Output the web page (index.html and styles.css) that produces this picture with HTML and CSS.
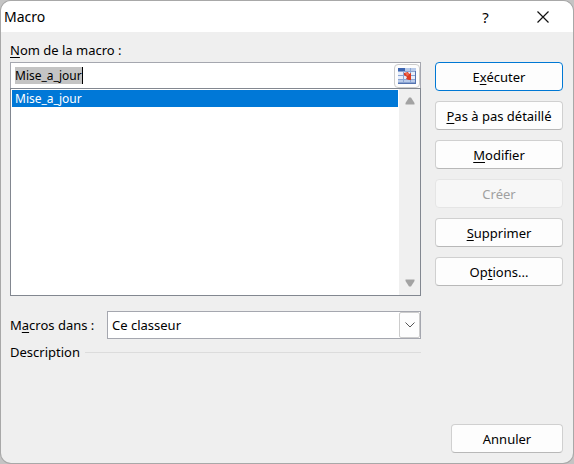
FILE: index.html
```html
<!DOCTYPE html>
<html lang="fr">
<head>
<meta charset="utf-8">
<title>Macro</title>
<link rel="stylesheet" href="styles.css">
</head>
<body>
<form class="dialog" role="dialog" aria-labelledby="title">
  <header class="titlebar">
    <h1 class="title" id="title">Macro</h1>
    <button class="caption help" type="button" aria-label="Aide">?</button>
    <button class="caption" type="button" aria-label="Fermer">
      <svg width="12" height="12" viewBox="0 0 12 12"><path d="M0.5 0.5 11.5 11.5M11.5 0.5 0.5 11.5" fill="none" stroke="#111" stroke-width="1.2"/></svg>
    </button>
  </header>
  <div class="content">
    <main class="main">
      <label class="label" for="name"><u>N</u>om de la macro :</label>
      <div class="field">
        <input class="name" id="name" type="text" value="Mise_a_jour">
        <button class="picker" type="button" aria-label="Choisir une cellule">
          <svg width="18" height="16" viewBox="0 0 18 16">
            <rect width="18" height="16" fill="#8ba5d3"/>
            <path d="M0 0h7v3H0z" fill="#3c64b0"/>
            <path d="M7 0h5v3H7zM13 0h5v3h-5z" fill="#b9cbea"/>
            <path d="M0 4h5v3H0zM6 4h6v3H6zM13 4h4v3h-4zM0 8h5v3H0zM6 8h6v3H6zM13 8h4v3h-4z" fill="#e8eefa"/>
            <path d="M0 12h5v2H0zM6 12h6v2H6zM13 12h4v2h-4z" fill="#b9cbea"/>
            <path d="M0 15h18v1H0zM17 3h1v13h-1z" fill="#5473b0"/>
            <path d="M6 5l4-1 1 2 2-1v7l-2 0-3-1 1-2-3-2z" fill="#dc3b22"/>
            <path d="M7 5h3l1 2-2 1z" fill="#ef6a4d"/>
          </svg>
        </button>
      </div>
      <div class="list">
        <ul class="options" role="listbox" aria-label="Macros">
          <li class="option" role="option" aria-selected="true">Mise_a_jour</li>
        </ul>
        <div class="scrollbar">
          <svg width="10" height="8" viewBox="0 0 10 8"><path d="M4 .5h2L9.500 6v1.500h-9V6z" fill="#a3a3a3"/></svg>
          <svg width="10" height="8" viewBox="0 0 10 8"><path d="M4 7.500h2L9.500 2V.5h-9V2z" fill="#a3a3a3"/></svg>
        </div>
      </div>
      <div class="scope">
        <label for="scope">M<u>a</u>cros dans :</label>
        <div class="combo">
          <select class="select" id="scope"><option>Ce classeur</option></select>
          <span class="chevron"><svg width="10" height="6" viewBox="0 0 10 6"><path d="M.5.5 5 5 9.500.5" fill="none" stroke="#555"/></svg></span>
        </div>
      </div>
      <h2 class="description">Description</h2>
    </main>
    <aside class="actions">
      <button class="button primary" type="submit">E<u>x</u>écuter</button>
      <button class="button" type="button"><u>P</u>as à pas détaillé</button>
      <button class="button" type="button"><u>M</u>odifier</button>
      <button class="button" type="button" disabled>Créer</button>
      <button class="button" type="button"><u>S</u>upprimer</button>
      <button class="button" type="button">Op<u>t</u>ions...</button>
    </aside>
  </div>
  <footer class="footer"><button class="button cancel" type="button">Annuler</button></footer>
</form>
</body>
</html>
```
FILE: styles.css
```css
* { box-sizing: border-box; }

body {
  margin: 0;
  min-height: 100vh;
  padding: 1px;
  display: flex;
  background: #c4c4c4;
  color: #000;
  font: 13px/18px "Noto Sans", sans-serif;
}

button, input, select { font: inherit; color: inherit; }

u { text-underline-offset: 2px; text-decoration-skip-ink: none; }

.dialog {
  flex: 1;
  display: flex;
  flex-direction: column;
  overflow: hidden;
  border-radius: 10px;
  background: #efefef;
  box-shadow: 0 0 0 1px #a8a8a8;
}

.titlebar {
  display: flex;
  align-items: center;
  height: 31px;
  padding: 0 2px 0 3px;
  background: #fff;
}

.title {
  flex: 1;
  margin: 0;
  font-size: 14px;
  font-weight: 400;
}

.caption {
  width: 57px;
  height: 31px;
  padding: 0;
  border: 0;
  background: none;
  display: grid;
  place-items: center;
}

.help { font-size: 15px; }

.content {
  display: flex;
  gap: 14px;
  padding: 9px 10px 0 9px;
}

.main { flex: 1; min-width: 0; }

.label { display: block; margin-bottom: 3px; }

.field {
  display: flex;
  align-items: center;
  justify-content: space-between;
  height: 26px;
  padding-left: 4px;
  border: 1px solid #a5a7af;
  border-bottom: 0;
  background: #fff;
}

.name {
  field-sizing: content;
  height: 17px;
  padding: 0;
  border: 0;
  border-right: 1px solid #000;
  background: #c4c4c4;
  font-size: 12px;
  outline: 0;
}

.picker {
  width: 26px;
  height: 24px;
  padding: 0;
  border: 1px solid #ccc;
  border-radius: 4px;
  background: #fdfdfd;
  display: grid;
  place-items: center;
}

.list {
  display: flex;
  height: 208px;
  border: 1px solid #828790;
  background: #fff;
}

.options {
  flex: 1;
  margin: 0;
  padding: 1px;
  list-style: none;
}

.option {
  padding-left: 3px;
  background: #0078d7;
  color: #fff;
  font-size: 12px;
  line-height: 17px;
}

.scrollbar {
  display: flex;
  flex-direction: column;
  justify-content: space-between;
  align-items: center;
  width: 21px;
  padding: 8px 0;
  background: #f0f0f0;
}

.scope {
  display: flex;
  align-items: center;
  justify-content: space-between;
  margin-top: 15px;
}

.combo { position: relative; width: 314px; }

.select {
  display: block;
  width: 100%;
  height: 28px;
  padding: 0 4px;
  appearance: none;
  border: 1px solid #a5a7af;
  border-radius: 0;
  background: #fff;
}

.chevron {
  position: absolute;
  inset: 1px 1px 1px auto;
  width: 21px;
  border: 1px solid #ccc;
  border-radius: 2px;
  background: #fdfdfd;
  display: grid;
  place-items: center;
  pointer-events: none;
}

.description {
  display: flex;
  align-items: center;
  gap: 5px;
  margin: 4px 0 0;
  font-size: 13px;
  font-weight: 400;
}

.description::after {
  content: "";
  flex: 1;
  height: 1px;
  background: #dcdcdc;
}

.actions {
  display: flex;
  flex-direction: column;
  gap: 10px;
  width: 128px;
  padding-top: 21px;
}

.button {
  height: 29px;
  padding: 0;
  border: 1px solid #d0d0d0;
  border-bottom-color: #b8b8b8;
  border-radius: 4px;
  background: #fdfdfd;
}

.button:disabled {
  border-color: #e5e5e5;
  background: #f7f7f7;
  color: #a0a0a0;
}

.primary { border-color: #0078d4; }

.footer {
  margin-top: auto;
  padding: 0 10px 10px;
  text-align: right;
}

.cancel { width: 112px; }
```
